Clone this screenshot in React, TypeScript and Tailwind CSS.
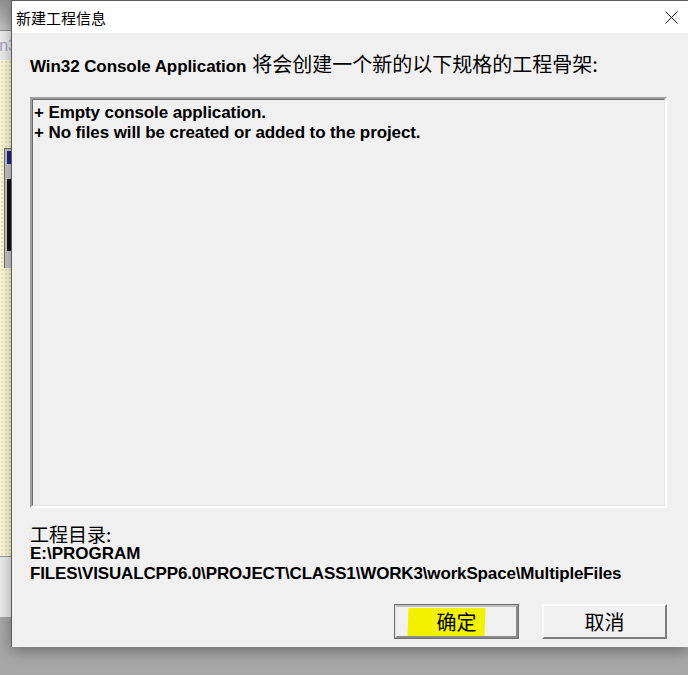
const cjk = "font-['Noto_Sans_CJK_SC',sans-serif]";
const latin = "font-['Liberation_Sans','Noto_Sans_CJK_SC',sans-serif]";

function BackgroundStrip() {
  return (
    <div className="flex w-[11px] shrink-0 flex-col">
      <div className="h-[31px] border-b border-[#8a8a8a] bg-gradient-to-b from-[#8f8f8f] to-[#c4c4c4]" />
      <div className="flex h-[29px] items-center justify-end overflow-hidden bg-[#eeeeee]">
        <span className="mr-[-6px] text-[16px] leading-none text-[#a4a8bc] font-['Liberation_Sans',sans-serif]">
          n3
        </span>
      </div>
      <div className="h-[496px] bg-[#fbfbf2] bg-[radial-gradient(circle,#f1ef7a_1px,transparent_1.2px)] bg-[length:4px_4px] pt-[88px]">
        <div className="ml-[4px] flex h-[120px] flex-col border-l border-t border-[#6b6b6b] bg-[#c8c8c8] pl-[2px] pt-[2px]">
          <div className="h-[13px] border-2 border-[#232386] bg-[#dcdcdc]" />
          <div className="mt-[15px] h-[72px] bg-[#111111]" />
        </div>
      </div>
      <div className="h-[61px] border-t border-[#9a9a9a] bg-[#ececec]" />
      <div className="flex-1" />
    </div>
  );
}

function CloseIcon() {
  return (
    <svg width="13" height="13" viewBox="0 0 13 13" className="block">
      <path d="M0.5 0.5 L12.5 12.5 M12.5 0.5 L0.5 12.5" stroke="#1a1a1a" strokeWidth="1" fill="none" />
    </svg>
  );
}

function DialogButton({ label, primary }: { label: string; primary?: boolean }) {
  return (
    <button
      type="button"
      className={
        primary
          ? "relative flex h-[35px] w-[125px] items-center justify-center border border-[#6f6f6f] bg-[#f0f0f0] p-0"
          : "relative flex h-[35px] w-[125px] items-center justify-center border-2 border-b-[#7d7d7d] border-l-[#fdfdfd] border-r-[#7d7d7d] border-t-[#fdfdfd] bg-[#f0f0f0] p-0"
      }
    >
      {primary ? (
        <span className="flex h-full w-full items-center justify-center border-2 border-b-[#8a8a8a] border-l-[#e6e6e6] border-r-[#8a8a8a] border-t-[#bdbdbd]">
          <span className="absolute left-[13px] top-[3px] h-[28px] w-[77px] -skew-x-2 bg-[#f2f200]" />
          <span className={`relative text-[20px] leading-none text-black ${cjk}`}>{label}</span>
        </span>
      ) : (
        <span className={`text-[20px] leading-none text-black ${cjk}`}>{label}</span>
      )}
    </button>
  );
}

export default function App() {
  return (
    <div className="flex h-[675px] w-[688px] overflow-hidden bg-[#a7a7a7]">
      <BackgroundStrip />

      <div className="flex h-[647px] w-[677px] shrink-0 flex-col border-l border-t border-[#5c5c5c] shadow-[0_4px_14px_rgba(0,0,0,0.35)]">
        <div className="flex h-[32px] items-center justify-between bg-white pl-[4px] pr-[10px]">
          <span className={`text-[15px] leading-none text-black ${cjk}`}>新建工程信息</span>
          <CloseIcon />
        </div>

        <div className="flex flex-1 flex-col bg-[#f0f0f0] pl-[18px] pr-[21px]">
          <p className="mt-[21px] flex h-[20px] items-baseline whitespace-nowrap leading-[20px] text-black">
            <span className={`text-[17px] font-bold tracking-[-0.08px] ${latin}`}>Win32 Console Application</span>
            <span className={`ml-[6px] text-[20px] ${cjk}`}>将会创建一个新的以下规格的工程骨架:</span>
          </p>

          <div className="mt-[23px] h-[411px] border-2 border-b-white border-l-[#a0a0a0] border-r-white border-t-[#a0a0a0]">
            <div className={`h-full border border-b-[#e3e3e3] border-l-[#6a6a6a] border-r-[#e3e3e3] border-t-[#6a6a6a] px-[1px] pt-[3px] text-[17px] font-bold leading-[20px] tracking-[-0.1px] text-black ${latin}`}>
              <p>+ Empty console application.</p>
              <p>+ No files will be created or added to the project.</p>
            </div>
          </div>

          <div className="mt-[16px] text-black">
            <p className={`h-[20px] text-[19px] leading-[20px] ${cjk}`}>工程目录:</p>
            <p className={`h-[20px] text-[17px] font-bold leading-[20px] ${latin}`}>E:\PROGRAM</p>
            <p className={`h-[20px] whitespace-nowrap text-[17px] font-bold leading-[20px] tracking-[-0.15px] ${latin}`}>
              FILES\VISUALCPP6.0\PROJECT\CLASS1\WORK3\workSpace\MultipleFiles
            </p>
          </div>

          <div className="mt-[20px] flex justify-end gap-[23px]">
            <DialogButton label="确定" primary />
            <DialogButton label="取消" />
          </div>
        </div>
      </div>
    </div>
  );
}
